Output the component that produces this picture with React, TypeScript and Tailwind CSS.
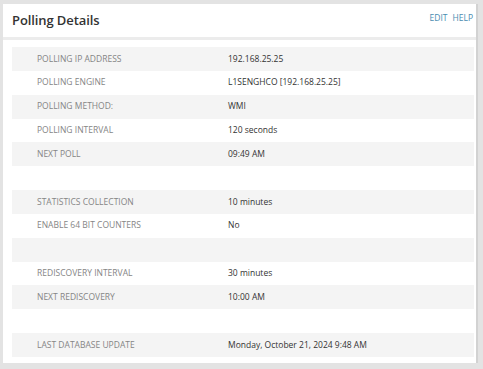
const rows: { label: string; value: string }[] = [
  { label: "Polling IP Address", value: "192.168.25.25" },
  { label: "Polling Engine", value: "L1SENGHCO [192.168.25.25]" },
  { label: "Polling Method:", value: "WMI" },
  { label: "Polling Interval", value: "120 seconds" },
  { label: "Next Poll", value: "09:49 AM" },
  { label: "", value: "" },
  { label: "Statistics Collection", value: "10 minutes" },
  { label: "Enable 64 Bit Counters", value: "No" },
  { label: "", value: "" },
  { label: "Rediscovery Interval", value: "30 minutes" },
  { label: "Next Rediscovery", value: "10:00 AM" },
  { label: "", value: "" },
  { label: "Last Database Update", value: "Monday, October 21, 2024 9:48 AM" },
];

export default function App() {
  return (
    <div
      className="w-[483px] h-[369px] bg-[#e3e3e3] pt-[4px] pl-[3px] pr-[5px] pb-[6px]"
      style={{ fontFamily: '"Open Sans", "Liberation Sans", sans-serif' }}
    >
      <div className="h-full bg-white border-r-2 border-[#d2d2d2] flex flex-col">
        <div className="h-[33px] flex items-center justify-between pl-[9px] pr-[3px]">
          <h2 className="text-[13px] font-semibold text-[#333] tracking-[-0.1px]">Polling Details</h2>
          <div className="self-start mt-[8px] flex gap-[5px] text-[8.5px] text-[#4a8cb0] uppercase">
            <span>Edit</span>
            <span>Help</span>
          </div>
        </div>
        <div className="h-[3px] bg-[#ececec]" />
        <div className="mt-[7px] ml-[9px] mr-[2px]">
          {rows.map((row, i) => (
            <div
              key={i}
              className={`h-[23.85px] flex items-center text-[8.5px] ${i % 2 === 0 ? "bg-[#f4f4f4]" : "bg-white"}`}
            >
              <span className="w-[216px] pl-[25px] uppercase text-[#858585]">{row.label}</span>
              <span className="text-[#333]">{row.value}</span>
            </div>
          ))}
        </div>
      </div>
    </div>
  );
}
